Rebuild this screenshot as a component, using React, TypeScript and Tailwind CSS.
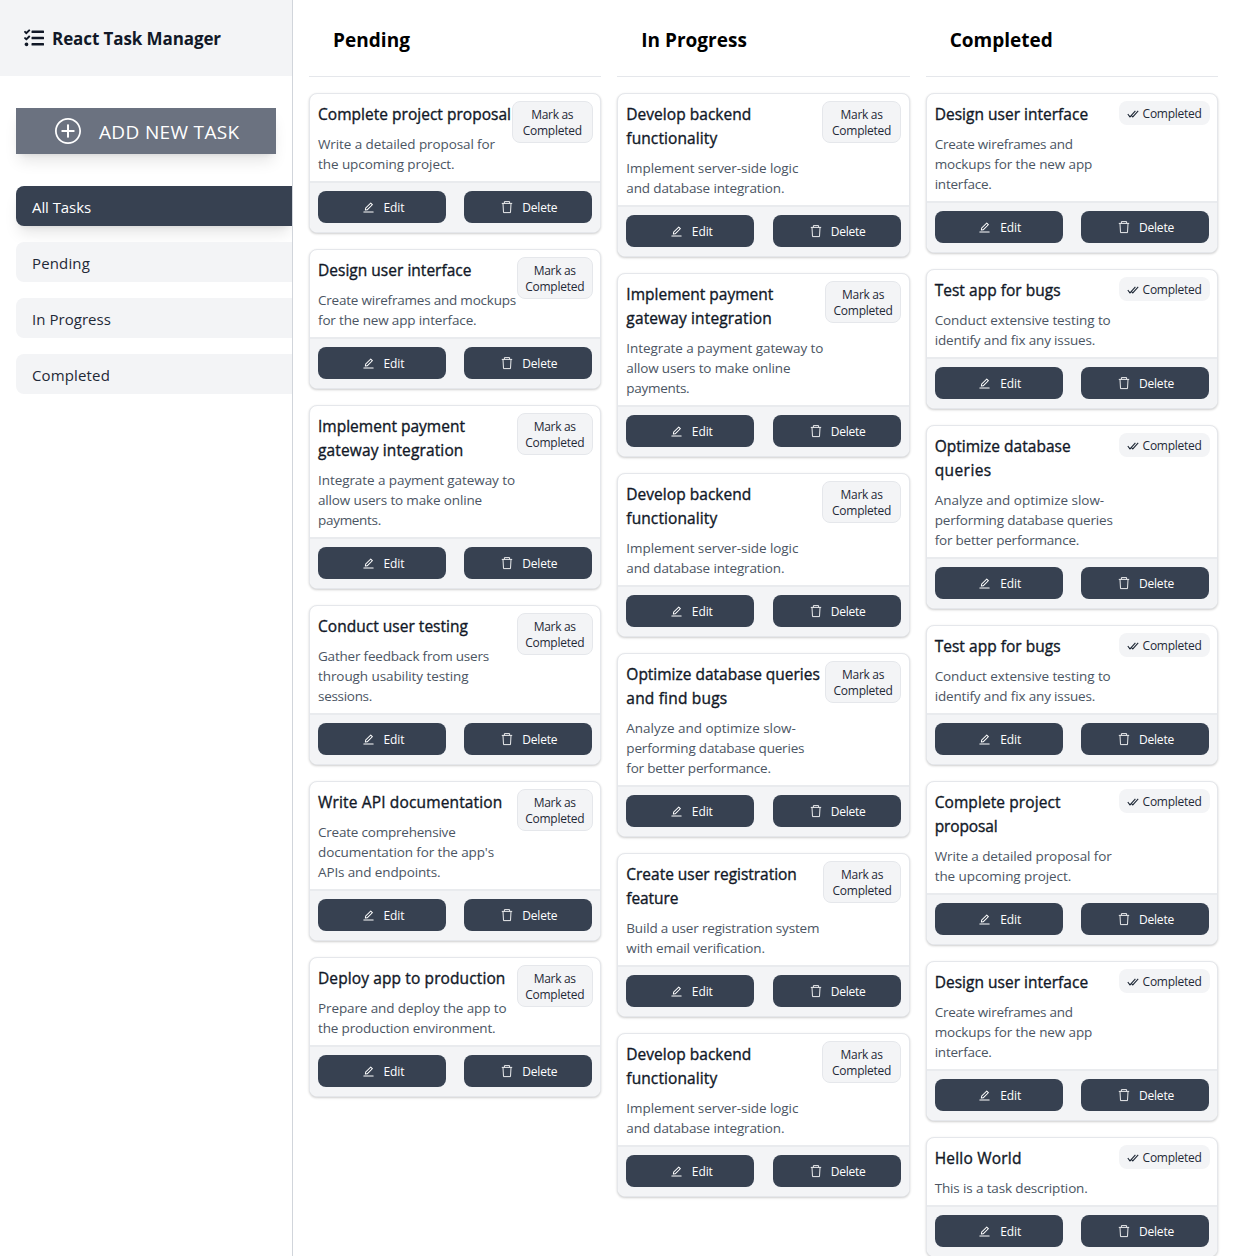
import React from "react";
import { FaTasks } from "react-icons/fa";
import { AiOutlineEdit } from "react-icons/ai";
import { IoIosAddCircleOutline } from "react-icons/io";

type Line = [text: string, width: number];
type Task = { title: Line[]; body: Line[]; badge?: string };

// Keeps each line of copy at a fixed measure.
function Text({ line, height, weight }: { line: Line; height: number; weight?: string }) {
  const ref = React.useRef<HTMLSpanElement>(null);
  React.useLayoutEffect(() => {
    const el = ref.current;
    if (!el) return;
    el.style.letterSpacing = "0px";
    const natural = el.getBoundingClientRect().width;
    el.style.letterSpacing = `${(line[1] - natural) / line[0].length}px`;
  }, [line]);
  return (
    <div className={weight} style={{ height, lineHeight: `${height}px` }}>
      <span ref={ref} className="inline-block whitespace-nowrap">{line[0]}</span>
    </div>
  );
}

const proposal: Line[] = [["Write a detailed proposal for", 177], ["the upcoming project.", 136.5]];
const backend: Line[] = [["Implement server-side logic", 172], ["and database integration.", 158]];
const gateway: Line[] = [["Integrate a payment gateway to", 197], ["allow users to make online", 164], ["payments.", 63]];
const wire3: Line[] = [["Create wireframes and", 138], ["mockups for the new app", 157.5], ["interface.", 57]];
const optimize: Line[] = [["Analyze and optimize slow-", 169.5], ["performing database queries", 178], ["for better performance.", 144.5]];
const testing: Line[] = [["Conduct extensive testing to", 176], ["identify and fix any issues.", 160.5]];
const devTitle: Line[] = [["Develop backend", 125], ["functionality", 91]];
const payTitle: Line[] = [["Implement payment", 147], ["gateway integration", 145.5]];
const design: Line[] = [["Design user interface", 153.5]];

const columns: { name: Line; tasks: Task[] }[] = [
  {
    name: ["Pending", 77],
    tasks: [
      { title: [["Complete project proposal", 193]], body: proposal, badge: "w-[81px]" },
      { title: design, body: [["Create wireframes and mockups", 198], ["for the new app interface.", 158.5]], badge: "w-[76px]" },
      { title: payTitle, body: gateway, badge: "w-[76px]" },
      { title: [["Conduct user testing", 150]], body: [["Gather feedback from users", 171], ["through usability testing", 150.5], ["sessions.", 54]], badge: "w-[76px]" },
      { title: [["Write API documentation", 184.5]], body: [["Create comprehensive", 137.5], ["documentation for the app's", 176], ["APIs and endpoints.", 122.5]], badge: "w-[76px]" },
      { title: [["Deploy app to production", 187.5]], body: [["Prepare and deploy the app to", 188.5], ["the production environment.", 177.5]], badge: "w-[76px]" },
    ],
  },
  {
    name: ["In Progress", 105.5],
    tasks: [
      { title: devTitle, body: backend, badge: "w-[79px]" },
      { title: payTitle, body: gateway, badge: "w-[76px]" },
      { title: devTitle, body: backend, badge: "w-[79px]" },
      { title: [["Optimize database queries", 193.5], ["and find bugs", 101]], body: optimize, badge: "w-[76px]" },
      { title: [["Create user registration", 170.5], ["feature", 52]], body: [["Build a user registration system", 193], ["with email verification.", 138.5]], badge: "w-[78px]" },
      { title: devTitle, body: backend, badge: "w-[79px]" },
    ],
  },
  {
    name: ["Completed", 103],
    tasks: [
      { title: design, body: wire3 },
      { title: [["Test app for bugs", 126]], body: testing },
      { title: [["Optimize database", 136], ["queries", 57]], body: optimize },
      { title: [["Test app for bugs", 126]], body: testing },
      { title: [["Complete project", 126], ["proposal", 63]], body: proposal },
      { title: design, body: wire3 },
      { title: [["Hello World", 87]], body: [["This is a task description.", 153]] },
    ],
  },
];

const editLabel: Line = ["Edit", 21];
const deleteLabel: Line = ["Delete", 35];
const markLabel: Line = ["Mark as", 42];
const completedLabel: Line = ["Completed", 59];
const appTitle: Line = ["React Task Manager", 169];
const addLabel: Line = ["ADD NEW TASK", 140.5];
const nav: Line[] = [["All Tasks", 59], ["Pending", 58], ["In Progress", 79], ["Completed", 78]];

function TrashIcon() {
  return (
    <svg viewBox="0 0 12 14" className="h-3.5 w-3" fill="none" stroke="currentColor" strokeWidth="0.9">
      <path d="M0.8 3.4H11.2M3.4 3.2V1.6H8.6V3.2M2 3.6L2.5 12.6H9.5L10 3.6" />
    </svg>
  );
}

function DoubleCheckIcon() {
  return (
    <svg viewBox="0 0 12 12" className="mr-1 size-3" fill="none" stroke="currentColor" strokeWidth="1.1">
      <path d="M0.8 6.2L3 8.8L8.4 2.8M4.6 7.4L5.8 8.8L11.2 2.8" />
    </svg>
  );
}

function Card({ task }: { task: Task }) {
  return (
    <article className="overflow-hidden rounded-lg border border-[#e5e7eb] bg-white shadow-[0_1px_3px_rgba(0,0,0,0.1),0_1px_2px_rgba(0,0,0,0.1)]">
      <div className="flex items-start justify-between px-2 pt-2 pb-[7px]">
        <div className="w-0 flex-1">
          <div className="mb-2 text-[15.5px] text-[#111827] [-webkit-text-stroke:0.35px_#111827]">
            {task.title.map((l) => <Text key={l[0]} line={l} height={24} />)}
          </div>
          <div className="text-[13.5px] text-[#4b5563]">
            {task.body.map((l) => <Text key={l[0]} line={l} height={20} />)}
          </div>
        </div>
        {task.badge ? (
          <button className={`${task.badge} -mt-px -mr-[0.4px] flex h-[42px] shrink-0 flex-col items-center justify-center rounded-lg border border-[#e5e7eb] bg-[#f3f4f6] pt-0.5 text-[12px] text-[#1f2937]`}>
            <Text line={markLabel} height={16} />
            <Text line={completedLabel} height={16} />
          </button>
        ) : (
          <span className="-mt-px -mr-[0.6px] flex h-6 w-[91px] shrink-0 items-center rounded-lg bg-[#f3f4f6] pt-px pl-2 text-[12px] text-[#1f2937]">
            <DoubleCheckIcon />
            <Text line={completedLabel} height={16} />
          </span>
        )}
      </div>
      <div className="flex justify-between border-t-2 border-[#e9ebee] bg-[#f3f4f6] px-2 pt-2 pb-[9px] text-[12px] text-white">
        <button className="flex h-8 w-32 items-center justify-center gap-[9px] rounded-lg bg-[#374151] pl-0.5">
          <AiOutlineEdit className="size-[13px]" />
          <Text line={editLabel} height={15} />
        </button>
        <button className="flex h-8 w-32 items-center justify-center gap-[9px] rounded-lg bg-[#374151] pl-0.5">
          <TrashIcon />
          <Text line={deleteLabel} height={15} />
        </button>
      </div>
    </article>
  );
}

export default function App() {
  return (
    <div className="flex h-[1256px] w-[1234px] overflow-hidden bg-white font-['Open_Sans','Noto_Sans',sans-serif]">
      <aside className="w-[293px] shrink-0 overflow-hidden border-r border-[#d1d5db]">
        <header className="flex h-[76px] items-center gap-2 bg-[#f3f4f6] pl-6 text-[17px] font-bold text-[#111827]">
          <FaTasks className="size-5" />
          <div className="pt-0.5"><Text line={appTitle} height={28} /></div>
        </header>
        <button className="mt-8 ml-4 flex h-[46px] w-[260px] items-center bg-[#6b7280] pl-9 text-[19px] text-white shadow-lg">
          <IoIosAddCircleOutline className="mr-[15px] size-8" />
          <div className="pt-0.5"><Text line={addLabel} height={28} /></div>
        </button>
        <nav className="mt-8 ml-4 flex flex-col gap-4 text-[15px] text-[#1f2937]">
          {nav.map((l, i) => (
            <a key={l[0]} className={i === 0 ? "flex h-10 items-center rounded-l-lg bg-[#374151] pt-0.5 pl-4 text-white shadow-lg" : "flex h-10 items-center rounded-l-lg bg-[#f3f4f6] pt-0.5 pl-4"}>
              <Text line={l} height={24} />
            </a>
          ))}
        </nav>
      </aside>
      <main className="grid flex-1 grid-cols-3 gap-4 px-4">
        {columns.map((c) => (
          <section key={c.name[0]}>
            <h2 className="mb-4 h-[77px] border-b border-[#e5e7eb] pt-[26px] pl-6 text-[19px] font-bold text-black">
              <Text line={c.name} height={28} />
            </h2>
            <div className="flex flex-col gap-4">
              {c.tasks.map((t, i) => <Card key={i} task={t} />)}
            </div>
          </section>
        ))}
      </main>
    </div>
  );
}
